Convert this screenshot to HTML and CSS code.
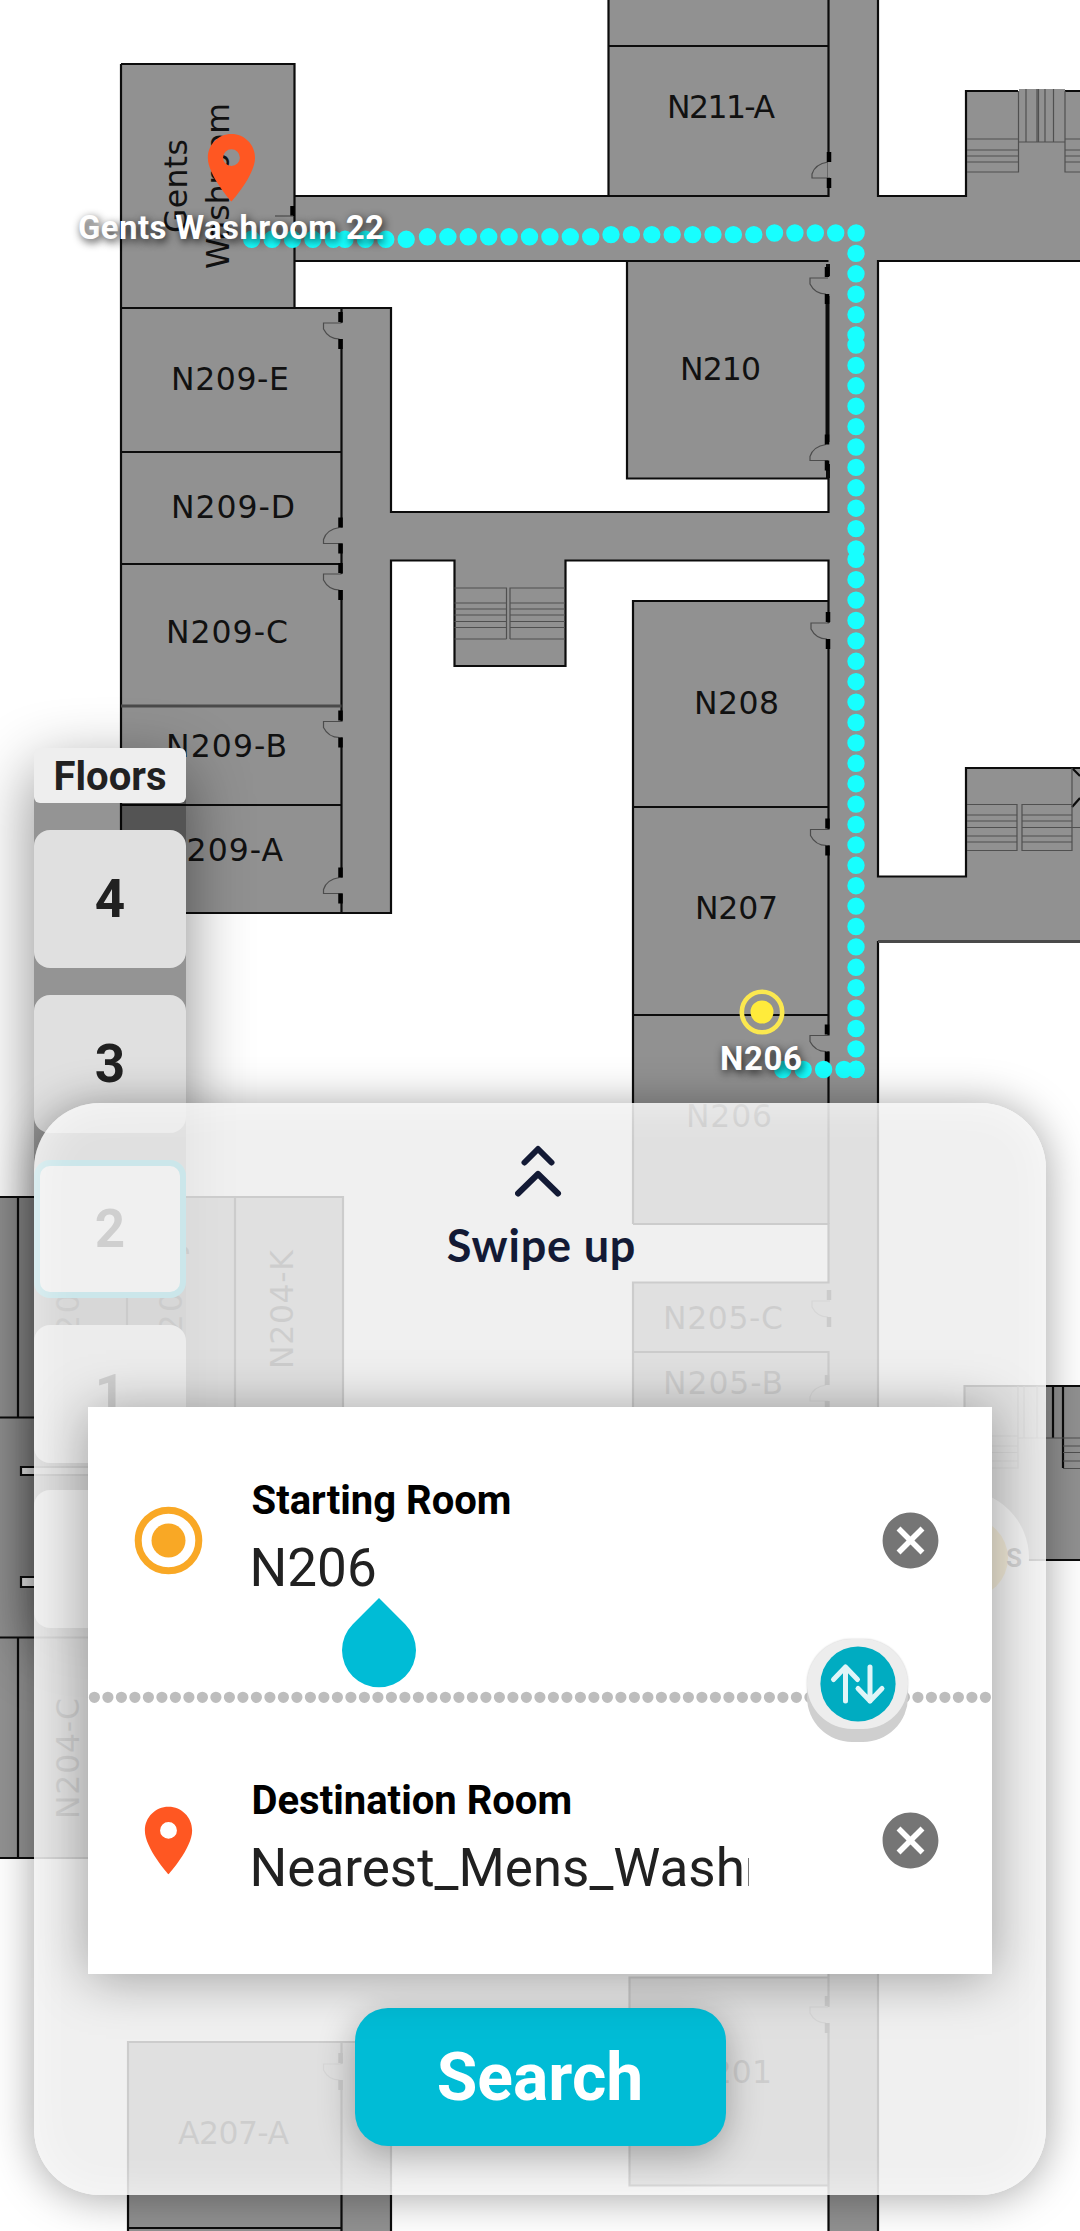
FILE: index.html
```html
<!DOCTYPE html>
<html lang="en">
<head>
<meta charset="utf-8">
<title>Indoor Navigation</title>
<link rel="stylesheet" href="styles.css">
</head>
<body>
<main class="screen">
  <svg class="map" viewBox="0 0 1080 2231" width="1080" height="2231">
    <defs>
      <g id="door-down">
        <path class="gap" d="M0 0V16"/>
        <path class="leaf" d="M0 0H-18V6Q-13 16 -2 16"/>
        <path class="jamb" d="M-1 -11V-1M-1 16V26"/>
      </g>
      <g id="door-up">
        <path class="gap" d="M0 -16V0"/>
        <path class="leaf" d="M0 0H-18V-4Q-15 -14 -2 -16"/>
        <path class="jamb" d="M-1 -26V-16M-1 0V10"/>
      </g>
    </defs>

    <!-- corridors and rooms, filled -->
    <g class="floor">
      <path d="M608.500 0H878V196H966V91H1019V89H1065V91H1080V261H878V876H966V768H1080V941H878V2231H828V2185H629.500V1977H828V1600H633V1282H828V1224H633V601H828V560.500H565.500V666H454.500V560.500H391V913H121V64H294.500V196H608.500ZM294.500 261V308H391V512H828V478.500H627V261Z" fill-rule="evenodd"/>
      <path d="M0 1197H343V1858H0ZM964.500 1386H1080V1560H964.500ZM128 2042H391V2231H128Z"/>
    </g>

    <g class="wall">
      <path d="M608.500 0V196M608.500 46H828.500M294.500 196H828.500V0M878 0V196H966V91H1018M1065 91H1080M1080 261H878V876.500H966V768H1080"/>
      <path d="M294.500 261H828.500M627 261V478.500H828M828.500 478V512H391V308H121M121 64H294.500V308M121 64V913H391V560.500H454.500V666H565.500V560.500H828.500V1224"/>
      <path d="M121 452H341.500M121 564H341.500M121 805H341.500M341.500 308V913"/>
      <path d="M633 1224V601H828.500M633 807H828.500M633 1015H828.500M633 1224H828.500V1282.500H633V1600M633 1352H828.500V2231M878 941V2231"/>
      <path d="M828 1977.500H629.500V2185.500H828M128 2231V2042H391V2231M341.500 2042V2231M128 2228H341.500"/>
      <path d="M0 1197H343V1500M18 1197V1417M127 1197V1417M235 1197V1417M0 1417.500H343M0 1637.500H343M18 1637V1858M0 1858H343"/>
      <path d="M964.500 1560V1386H1080M964.500 1560H1080M1053 1386V1438M1063 1386V1468"/>
      <path d="M1072 768L1080 776M1072 807L1080 798"/>
    </g>
    <path class="wall thick" d="M827.500 296V442M828 264V276M828 464V478"/>
    <path class="wall soft" d="M121 706H341.500M878 941.500H1080"/>
    <path class="slot" d="M100 1467H21V1475H100ZM100 1577H21V1587H100Z"/>

    <!-- staircases -->
    <g class="stairs">
      <path d="M967 139H1018.500M967 150H1018.500M967 156H1018.500M967 162H1018.500M967 172H1018.500V91M1065 139H1080M1065 150H1080M1065 156H1080M1065 162H1080M1080 172H1065V91"/>
      <path d="M1018.500 142H1065M1026 89V142M1037 89V142M1038.500 89V142M1045 89V142M1053.500 89V142"/>
      <path d="M454.500 588H506.500V639M454.500 603H506.500M454.500 609H506.500M454.500 615H506.500M454.500 621.500H506.500M454.500 627.500H506.500M454.500 639H506.500M510 639V588H565M510 603H565M510 609H565M510 615H565M510 621.500H565M510 627.500H565M510 639H565"/>
      <path d="M967 804.500H1017V850.500H967M967 815H1017M967 821H1017M967 827.500H1017M967 836H1017M967 842H1017M1022 804.500H1072V850.500H1022ZM1022 815H1072M1022 821H1072M1022 827.500H1080M1022 836H1072M1022 842H1072M1072 768V805"/>
      <path d="M965 1436H1018V1468H965M965 1446H1018M965 1452.500H1018M965 1461H1018M1018 1386V1438H1080M1024 1386V1438M1037 1386V1438M1063 1446H1080M1063 1452.500H1080M1063 1461H1080M1063 1468.500H1080"/>
    </g>

    <use href="#door-down" x="341.500" y="323"/>
    <use href="#door-up" x="341.500" y="543.500"/>
    <use href="#door-down" x="341.500" y="574"/>
    <use href="#door-down" x="341.500" y="721.500"/>
    <use href="#door-up" x="341.500" y="893.500"/>
    <use href="#door-up" x="830" y="178"/>
    <use href="#door-down" x="828" y="278"/>
    <use href="#door-up" x="828" y="460.500"/>
    <use href="#door-down" x="829" y="623"/>
    <use href="#door-down" x="828.500" y="829.500"/>
    <use href="#door-down" x="828" y="1035.500"/>
    <use href="#door-down" x="830" y="1301"/>
    <use href="#door-up" x="828" y="1401"/>
    <use href="#door-down" x="341.500" y="2064"/>
    <use href="#door-down" x="828" y="2007"/>
    <path class="jamb" d="M292.500 206V216"/>
    <path class="leaf" d="M275 216H293"/>

    <g class="room">
      <text x="667" y="118" textLength="108">N211-A</text>
      <text x="680" y="379.500" textLength="81">N210</text>
      <text x="171" y="390" textLength="118">N209-E</text>
      <text x="171" y="518" textLength="124">N209-D</text>
      <text x="166" y="643" textLength="122">N209-C</text>
      <text x="166" y="757" textLength="121">N209-B</text>
      <text x="162" y="861" textLength="121">N209-A</text>
      <text x="694" y="714" textLength="85">N208</text>
      <text x="695" y="918.500" textLength="83">N207</text>
      <text x="686" y="1127" textLength="86">N206</text>
      <text x="663" y="1328.500" textLength="120">N205-C</text>
      <text x="663" y="1394" textLength="120">N205-B</text>
      <text x="178" y="2144" textLength="111">A207-A</text>
      <text x="688" y="2083" textLength="84">N201</text>
      <text transform="translate(187 233) rotate(-90)" textLength="94">Gents</text>
      <text transform="translate(229 269) rotate(-90)" textLength="166">Washroom</text>
      <text transform="translate(293 1369) rotate(-90)" textLength="119">N204-K</text>
      <text transform="translate(182 1360) rotate(-90)" textLength="117">N204-J</text>
      <text transform="translate(79 1360) rotate(-90)" textLength="112">N204-I</text>
      <text transform="translate(79 1819) rotate(-90)" textLength="121">N204-C</text>
    </g>

    <g class="route">
      <path d="M251.700 239.300H333.500M345 239.300H408M427.500 236.800H591M611 234.600H754.500M774.500 233H856.500"/>
      <path d="M856 253.400V335M856 345V549M856 559.300V1070"/>
      <path d="M782.800 1069.500H844M856 1069.500h.1"/>
    </g>

    <path class="pin" transform="translate(191 127.300) scale(3.370)" d="M12 2C8.130 2 5 5.130 5 9c0 5.250 7 13 7 13s7-7.750 7-13c0-3.870-3.130-7-7-7zm0 9.500a2.500 2.500 0 0 1 0-5 2.500 2.500 0 0 1 0 5z"/>
    <circle class="ring" cx="762" cy="1012" r="20.200"/>
    <circle class="bead" cx="762" cy="1012" r="11.500"/>
    <text class="tag" x="78" y="238.500" textLength="306">Gents Washroom 22</text>
    <text class="tag" x="720" y="1069.500" textLength="82">N206</text>

    <circle cx="961" cy="1558" r="68" fill="#fff"/>
    <circle cx="968" cy="1558" r="40" fill="#f9c54d"/>
    <text class="compass" x="1006" y="1566.500">S</text>
  </svg>

  <nav class="floors">
    <div class="floors-title">Floors</div>
    <button class="floor-btn">4</button>
    <button class="floor-btn">3</button>
    <button class="floor-btn active">2</button>
    <button class="floor-btn">1</button>
    <button class="floor-btn">G</button>
  </nav>

  <section class="panel">
    <header class="swipe">
      <svg width="50" height="56" viewBox="0 0 50 56"><path d="M9.500 19.500L23 6L36.500 19.500M3 50.500L23 31L43 50.500"/></svg>
      <span>Swipe up</span>
    </header>

    <div class="card">
      <div class="row">
        <svg class="lead" width="81" height="81" viewBox="0 0 81 81"><circle cx="40.500" cy="40.500" r="30.300" fill="none" stroke="#f9a825" stroke-width="7"/><circle cx="40.500" cy="40.500" r="17" fill="#f9a825"/></svg>
        <div class="field">
          <label>Starting Room</label>
          <div class="value">N206</div>
        </div>
        <svg class="clear" width="67" height="67" viewBox="0 0 24 24"><path d="M12 2C6.470 2 2 6.470 2 12s4.470 10 10 10 10-4.470 10-10S17.530 2 12 2zm5 13.590L15.590 17 12 13.410 8.410 17 7 15.590 10.590 12 7 8.410 8.410 7 12 10.590 15.590 7 17 8.410 13.410 12 17 15.590z"/></svg>
      </div>
      <svg class="divider" width="904" height="34" viewBox="0 0 904 34"><path d="M6.400 23.300H898"/></svg>
      <div class="row">
        <svg class="lead" width="81" height="81" viewBox="0 0 24 24"><path fill="#ff5722" d="M12 2C8.130 2 5 5.130 5 9c0 5.250 7 13 7 13s7-7.750 7-13c0-3.870-3.130-7-7-7zm0 9.500a2.500 2.500 0 0 1 0-5 2.500 2.500 0 0 1 0 5z"/></svg>
        <div class="field">
          <label>Destination Room</label>
          <div class="value">Nearest_Mens_Washroom</div>
        </div>
        <svg class="clear" width="67" height="67" viewBox="0 0 24 24"><path d="M12 2C6.470 2 2 6.470 2 12s4.470 10 10 10 10-4.470 10-10S17.530 2 12 2zm5 13.590L15.590 17 12 13.410 8.410 17 7 15.590 10.590 12 7 8.410 8.410 7 12 10.590 15.590 7 17 8.410 13.410 12 17 15.590z"/></svg>
      </div>
      <svg class="caret" width="74" height="90" viewBox="0 0 74 90"><path d="M37 0L63.200 26.200A37 37 0 1 1 10.800 26.200Z"/></svg>
      <button class="swap">
        <svg width="76" height="76" viewBox="0 0 76 76"><circle cx="38" cy="38" r="37.600" fill="#00acc1"/><path d="M25.500 55V21M13.500 33.500L25.500 21L37.500 33.500M50 21V55M38 42.500L50 55L62 42.500"/></svg>
      </button>
    </div>

    <button class="search">Search</button>
  </section>
</main>
</body>
</html>
```
FILE: styles.css
```css
* { box-sizing: border-box; }
body { margin: 0; background: #fff; font-family: Roboto, "Liberation Sans", sans-serif; }
button { border: 0; padding: 0; font-family: inherit; }

.screen { position: relative; width: 1080px; height: 2231px; overflow: hidden; background: #fff; }
.map { display: block; }

.floor { fill: #919191; }
.wall { fill: none; stroke: #0c0c0c; stroke-width: 2.2; }
.thick { stroke-width: 4; }
.soft { stroke: #4a4a4a; stroke-width: 3; }
.slot { fill: #fff; stroke: #111; stroke-width: 2.2; }
.stairs { fill: none; stroke: #505050; stroke-width: 1.2; }
.gap { fill: none; stroke: #919191; stroke-width: 5; }
.leaf { fill: none; stroke: #4c4c4c; stroke-width: 1.2; }
.jamb { fill: none; stroke: #000; stroke-width: 4.5; }
.room { font: 31.5px "DejaVu Sans", sans-serif; fill: #111; }
.route { fill: none; stroke: #17ffff; stroke-width: 17.4; stroke-linecap: round; stroke-dasharray: 0 20.4; }
.pin { fill: #ff5722; }
.ring { fill: none; stroke: #fbe84f; stroke-width: 4.6; }
.bead { fill: #ffeb3b; }
.tag { font-size: 33px; font-weight: 700; fill: #fff; text-shadow: 2px 3px 9px rgba(0, 0, 0, .85); }
.compass { font-size: 26px; font-weight: 700; fill: #212121; }

.floors {
  position: absolute; left: 34px; top: 748px; width: 152px;
  display: flex; flex-direction: column; gap: 27px;
  box-shadow: 0 20px 64px rgba(0, 0, 0, .46), inset 0 0 0 200px rgba(0, 0, 0, .42);
  border-radius: 16px;
}
.floors-title {
  height: 54.500px; line-height: 58px; border-radius: 6px; background: #eee;
  color: #212121; font-size: 40px; font-weight: 700; text-align: center;
}
.floor-btn {
  height: 138px; border-radius: 16px; background: #e0e0e0;
  color: #212121; font-size: 53px; font-weight: 700;
}
.floor-btn.active { background: #fff; border: 6.500px solid #00bcd4; }

.panel {
  position: absolute; left: 34px; top: 1103px; width: 1012px; height: 1092px;
  display: flex; flex-direction: column; align-items: center;
  border-radius: 66px; background: rgba(238, 238, 238, .855);
  box-shadow: 0 2px 44px rgba(0, 0, 0, .36), inset 0 0 44px rgba(255, 255, 255, .6);
}
.swipe {
  height: 304px; padding-top: 40px;
  display: flex; flex-direction: column; align-items: center;
  color: #131a35; font: 700 45px/60px Lato, sans-serif; letter-spacing: .8px;
}
.swipe svg { fill: none; stroke: #131a35; stroke-width: 6; stroke-linecap: round; stroke-linejoin: round; }
.swipe span { margin-top: 16px; margin-left: 3px; }

.card {
  position: relative; width: 904px; height: 567px; background: #fff;
  display: flex; flex-direction: column;
  box-shadow: 0 4px 50px rgba(0, 0, 0, .34);
}
.row { height: 267px; padding: 0 48px 0 40px; display: flex; align-items: center; }
.field { width: 499.500px; margin: 0 128px 5px 40.500px; overflow: hidden; }
.field label { display: block; font-size: 40px; line-height: 47px; font-weight: 700; color: #000; padding-left: 2px; }
.value { margin-top: 13px; font-size: 53px; line-height: 62px; color: #212121; white-space: nowrap; }
.row svg { flex: none; }
.clear { fill: #757575; }
.divider { display: block; flex: none; fill: none; stroke: #bdbdbd; stroke-width: 11.2; stroke-linecap: round; stroke-dasharray: 0 13.5; }
.caret { position: absolute; left: 254px; top: 190.500px; fill: #00bcd6; }
.swap {
  position: absolute; left: 719px; top: 232px; width: 101px; height: 90px;
  display: flex; align-items: center; justify-content: center;
  border-radius: 45px; background: #ededed;
  box-shadow: 0 13px 0 #cfcfcf, 0 0 2px #ccc;
}
.swap path { fill: none; stroke: #e0f5f8; stroke-width: 5; stroke-linecap: round; stroke-linejoin: round; }

.search {
  width: 371px; height: 138px; margin-top: 34px; border-radius: 33px;
  background: #00bcd6; color: #fff; font-size: 66px; font-weight: 700;
  box-shadow: 0 8px 36px rgba(0, 0, 0, .3);
}
```
